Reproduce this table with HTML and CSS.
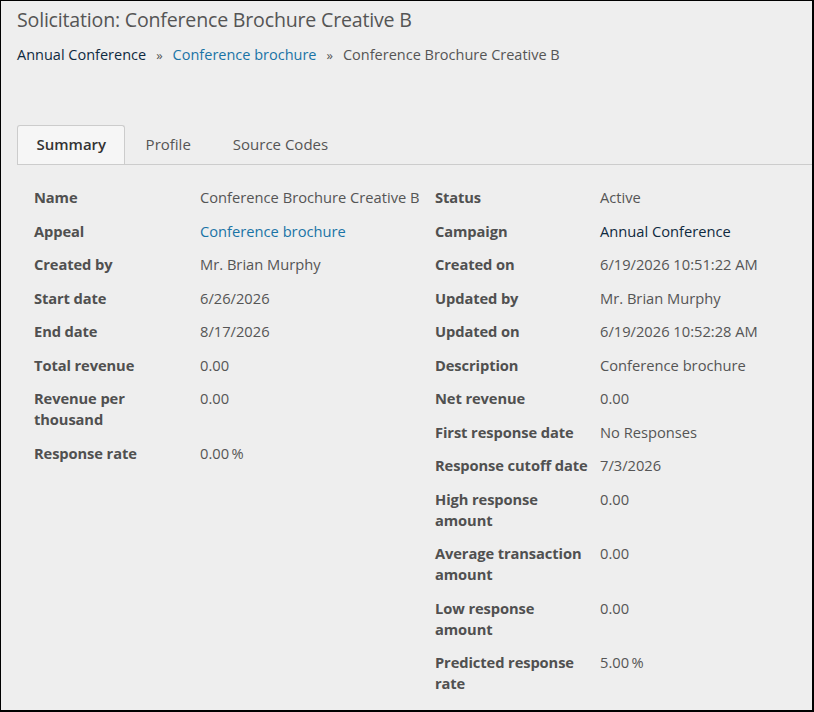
FILE: index.html
```html
<!DOCTYPE html>
<html lang="en">
<head>
<meta charset="utf-8">
<title>Solicitation: Conference Brochure Creative B</title>
<link rel="stylesheet" href="styles.css">
</head>
<body>
<div class="page">
  <header class="header">
    <h1 class="title">Solicitation: Conference Brochure Creative B</h1>
    <nav class="crumbs">
      <a class="crumb crumb-dark" href="#">Annual Conference</a>
      <span class="sep">»</span>
      <a class="crumb crumb-link" href="#">Conference brochure</a>
      <span class="sep">»</span>
      <span class="crumb crumb-current">Conference Brochure Creative B</span>
    </nav>
  </header>

  <div class="tabs">
    <div class="tab tab-active">Summary</div>
    <div class="tab">Profile</div>
    <div class="tab">Source Codes</div>
  </div>

  <div class="summary">
    <dl class="fields fields-left">
      <dt>Name</dt><dd>Conference Brochure Creative B</dd>
      <dt>Appeal</dt><dd><a class="link" href="#">Conference brochure</a></dd>
      <dt>Created by</dt><dd>Mr. Brian Murphy</dd>
      <dt>Start date</dt><dd>6/26/2026</dd>
      <dt>End date</dt><dd>8/17/2026</dd>
      <dt>Total revenue</dt><dd>0.00</dd>
      <dt>Revenue per thousand</dt><dd>0.00</dd>
      <dt>Response rate</dt><dd>0.00&#8201;%</dd>
    </dl>
    <dl class="fields">
      <dt>Status</dt><dd>Active</dd>
      <dt>Campaign</dt><dd><a class="link-dark" href="#">Annual Conference</a></dd>
      <dt>Created on</dt><dd>6/19/2026 10:51:22 AM</dd>
      <dt>Updated by</dt><dd>Mr. Brian Murphy</dd>
      <dt>Updated on</dt><dd>6/19/2026 10:52:28 AM</dd>
      <dt>Description</dt><dd>Conference brochure</dd>
      <dt>Net revenue</dt><dd>0.00</dd>
      <dt>First response date</dt><dd>No Responses</dd>
      <dt>Response cutoff date</dt><dd>7/3/2026</dd>
      <dt>High response amount</dt><dd>0.00</dd>
      <dt>Average transaction amount</dt><dd>0.00</dd>
      <dt>Low response amount</dt><dd>0.00</dd>
      <dt>Predicted response rate</dt><dd>5.00&#8201;%</dd>
    </dl>
  </div>
</div>
</body>
</html>
```

FILE: styles.css
```css
html, body {
  margin: 0;
  padding: 0;
}

body {
  font-family: "Open Sans", "Liberation Sans", sans-serif;
  color: #555;
  background: #eeeeee;
}

.page {
  box-sizing: border-box;
  width: 814px;
  height: 712px;
  background: #eeeeee;
  border-top: 1px solid #000;
  border-left: 1px solid #000;
  border-right: 2px solid #000;
  border-bottom: 2px solid #000;
  overflow: hidden;
}

.header {
  padding: 6px 0 0 16px;
}

.title {
  margin: 0;
  font-size: 19.6px;
  font-weight: 400;
  line-height: 26px;
  color: #555;
  letter-spacing: -0.2px;
}

.crumbs {
  margin-top: 10px;
  font-size: 14.5px;
  line-height: 24px;
  display: flex;
  align-items: baseline;
}

.crumb {
  text-decoration: none;
}

.crumb-dark {
  color: #0f2a40;
}

.crumb-link {
  color: #1a74a6;
}

.crumb-current {
  color: #555;
}

.sep {
  color: #555;
  margin: 0 10px;
  font-size: 13px;
}

.tabs {
  margin: 58px 0 0 16px;
  display: flex;
  border-bottom: 1px solid #cccccc;
  height: 39px;
}

.tab {
  box-sizing: border-box;
  height: 39px;
  line-height: 37px;
  padding: 0 20px;
  font-size: 15px;
  color: #555;
  border: 1px solid transparent;
}

.tab-active {
  background: #f6f6f6;
  border-color: #cccccc;
  border-bottom: none;
  border-radius: 3px 3px 0 0;
  font-weight: 600;
  color: #333;
  padding: 0 17.5px 0 18.5px;
}

.summary {
  display: grid;
  grid-template-columns: 401px 1fr;
  padding: 22px 0 0 33px;
}

.fields {
  margin: 0;
  display: grid;
  grid-template-columns: 165px 1fr;
  row-gap: 12.5px;
  align-content: start;
  font-size: 14.7px;
  line-height: 21px;
}

.fields-left {
  grid-template-columns: 166px 1fr;
}

.fields dt {
  font-weight: 700;
  color: #505050;
  padding-right: 10px;
  letter-spacing: -0.1px;
}

.fields dd {
  margin: 0;
  color: #555;
  white-space: nowrap;
}

.link {
  color: #1a74a6;
  text-decoration: none;
}

.link-dark {
  color: #0f2a40;
  text-decoration: none;
}
```
